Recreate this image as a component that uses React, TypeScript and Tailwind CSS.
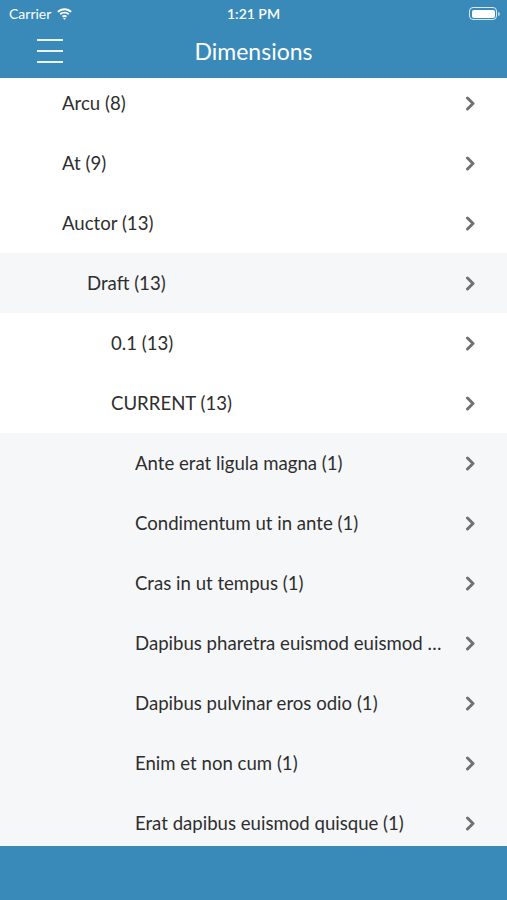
interface Row {
  label: string;
  level: number;
  shaded?: boolean;
}

const rows: Row[] = [
  { label: "Arcu (8)", level: 0 },
  { label: "At (9)", level: 0 },
  { label: "Auctor (13)", level: 0 },
  { label: "Draft (13)", level: 1, shaded: true },
  { label: "0.1 (13)", level: 2 },
  { label: "CURRENT (13)", level: 2 },
  { label: "Ante erat ligula magna (1)", level: 3, shaded: true },
  { label: "Condimentum ut in ante (1)", level: 3, shaded: true },
  { label: "Cras in ut tempus (1)", level: 3, shaded: true },
  { label: "Dapibus pharetra euismod euismod quisque (1)", level: 3, shaded: true },
  { label: "Dapibus pulvinar eros odio (1)", level: 3, shaded: true },
  { label: "Enim et non cum (1)", level: 3, shaded: true },
  { label: "Erat dapibus euismod quisque (1)", level: 3, shaded: true },
];

const indent = ["pl-[62px]", "pl-[87px]", "pl-[111px]", "pl-[135px]"];

function Chevron() {
  return (
    <svg width="11" height="15" viewBox="0 0 11 15" className="shrink-0">
      <path
        d="M2.5 2l5.5 5.5-5.5 5.5"
        fill="none"
        stroke="#727272"
        strokeWidth="3"
        strokeLinecap="round"
        strokeLinejoin="round"
      />
    </svg>
  );
}

function StatusBar() {
  return (
    <div className="relative flex h-[27px] items-center justify-between pl-[9px] pr-[7px] text-white text-[14px]">
      <div className="flex items-center gap-[5px]">
        <span>Carrier</span>
        <svg width="17" height="12" viewBox="0 0 17 12" fill="white">
          <path d="M8.5 2.2c2.3 0 4.4.9 6 2.4l1.3-1.4C13.9 1.4 11.3.3 8.5.3S3.1 1.4 1.2 3.2l1.3 1.4c1.6-1.5 3.7-2.4 6-2.4z" />
          <path d="M8.5 5.6c1.4 0 2.6.5 3.6 1.4l1.3-1.4C12.1 4.4 10.4 3.7 8.5 3.7S4.9 4.4 3.6 5.6L4.9 7c1-.9 2.2-1.4 3.6-1.4z" />
          <path d="M8.5 9c.5 0 1 .2 1.3.5l1.3-1.4c-.7-.6-1.6-1-2.6-1s-1.9.4-2.6 1l1.3 1.4c.3-.3.8-.5 1.3-.5zM8.5 11.8l1.3-1.4c-.4-.3-.8-.4-1.3-.4s-.9.1-1.3.4z" />
        </svg>
      </div>
      <span className="absolute left-1/2 -translate-x-1/2 font-semibold">1:21 PM</span>
      <div className="flex items-center">
        <div className="h-[13px] w-[28px] rounded-[4px] border border-white/80 p-[1.5px]">
          <div className="h-full w-full rounded-[2px] bg-white" />
        </div>
        <div className="ml-[1px] h-[4px] w-[2px] rounded-r bg-white/60" />
      </div>
    </div>
  );
}

export default function App() {
  return (
    <div
      className="flex h-[900px] w-[507px] flex-col overflow-hidden bg-white"
      style={{ fontFamily: "Lato, 'Open Sans', sans-serif" }}
    >
      <div className="bg-[#3a8ab9]">
        <StatusBar />
        <div className="relative flex h-[51px] items-start justify-center">
          <button className="absolute left-[37px] top-[12px] flex h-[24px] w-[26px] flex-col justify-between">
            <span className="h-[2px] w-full bg-white/90" />
            <span className="h-[2px] w-full bg-white/90" />
            <span className="h-[2px] w-full bg-white/90" />
          </button>
          <h1 className="mt-[8px] text-[23px] leading-[32px] text-white">Dimensions</h1>
        </div>
      </div>

      <div className="flex-1 overflow-hidden">
        <ul className="-mt-[5px]">
          {rows.map((row) => (
            <li
              key={row.label}
              className={`flex h-[60px] items-center pr-[31px] ${indent[row.level]} ${
                row.shaded ? "bg-[#f6f7f9]" : "bg-white"
              }`}
            >
              <span className="mt-[2px] min-w-0 flex-1 truncate pr-[22px] text-[18.6px] text-[#2e2e2e]">
                {row.label}
              </span>
              <Chevron />
            </li>
          ))}
        </ul>
      </div>

      <div className="h-[54px] bg-[#3a8ab9]" />
    </div>
  );
}
